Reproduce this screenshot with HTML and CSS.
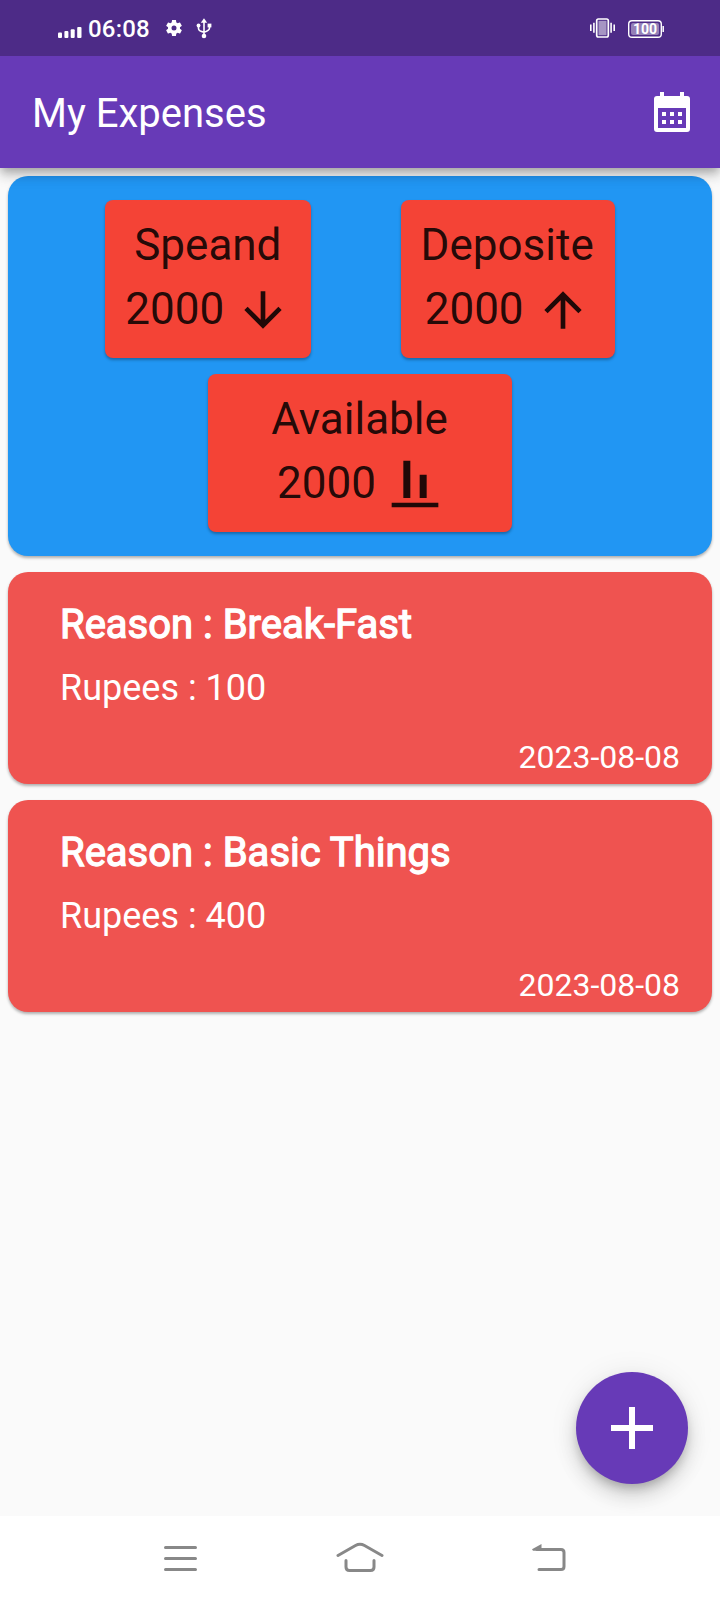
FILE: index.html
```
<!DOCTYPE html>
<html lang="en">
<head>
<meta charset="utf-8">
<title>My Expenses</title>
<link rel="stylesheet" href="styles.css">
</head>
<body>
<div class="screen">
  <header class="status-bar">
    <svg class="signal" width="24" height="11" viewBox="0 0 24 11" fill="#fff"><rect y="5.4" width="4" height="5.6" rx="1"/><rect x="6.4" y="4" width="4" height="7" rx="1"/><rect x="12.7" y="2.2" width="4" height="8.8" rx="1"/><rect x="19.2" width="4.3" height="11" rx="1"/></svg>
    <span class="clock">06:08</span>
    <svg class="gear" width="20" height="20" viewBox="0 0 24 24" fill="#fff"><path d="M19.14 12.94c.04-.3.06-.61.06-.94 0-.32-.02-.64-.07-.94l2.03-1.58c.18-.14.23-.41.12-.61l-1.92-3.32c-.12-.22-.37-.29-.59-.22l-2.39.96c-.5-.38-1.03-.7-1.62-.94l-.36-2.54c-.04-.24-.24-.41-.48-.41h-3.84c-.24 0-.43.17-.47.41l-.36 2.54c-.59.24-1.13.57-1.62.94l-2.39-.96c-.22-.08-.47 0-.59.22L2.74 8.87c-.12.21-.08.47.12.61l2.03 1.58c-.05.3-.09.63-.09.94s.02.64.07.94l-2.03 1.58c-.18.14-.23.41-.12.61l1.92 3.32c.12.22.37.29.59.22l2.39-.96c.5.38 1.03.7 1.62.94l.36 2.54c.05.24.24.41.48.41h3.84c.24 0 .44-.17.47-.41l.36-2.54c.59-.24 1.13-.56 1.62-.94l2.39.96c.22.08.47 0 .59-.22l1.92-3.32c.12-.22.07-.47-.12-.61l-2.01-1.58zM12 15a3 3 0 1 1 0-6 3 3 0 0 1 0 6z"/></svg>
    <svg class="usb" width="16" height="21" viewBox="0 0 16 21" fill="none" stroke="#fff" stroke-width="1.6"><path d="M8 3v14M2.5 7v3.5Q2.5 13 8 14.2M13.500 7v3Q13.500 12.500 8 14.200"/><g fill="#fff" stroke="none"><path d="M8 .2 11.200 4.700H4.800z"/><circle cx="8" cy="18" r="2.300"/><circle cx="2.500" cy="7.500" r="1.900"/><path d="M11.600 5.600h3.800v3.800h-3.800z"/></g></svg>
    <span class="spacer"></span>
    <svg class="vibrate" width="25" height="20" viewBox="0 0 25 20"><rect x="6.700" y="1" width="11.600" height="18" rx="1.700" fill="none" stroke="#fff" stroke-width="1.700"/><rect x="8.500" y="2.800" width="8" height="14.400" fill="#a695c3"/><path d="M.800 6.500v6.500M3.900 4.800v10M21.100 4.800v10M24.200 6.500v6.500" stroke="#fff" stroke-width="1.600"/></svg>
    <div class="battery">
      <svg width="36" height="18" viewBox="0 0 36 18"><rect x=".700" y=".700" width="32.600" height="16.600" rx="3.300" fill="none" stroke="#fff" stroke-width="1.400"/><rect x="3" y="3" width="28" height="12" rx="2" fill="#9480b7"/><path d="M35.200 6v6" stroke="#fff" stroke-width="1.500"/></svg>
      <span class="level">100</span>
    </div>
  </header>
  <div class="app-bar">
    <h1 class="title">My Expenses</h1>
    <svg width="48" height="48" viewBox="0 0 24 24" fill="#fff" fill-rule="evenodd"><path d="M6 1h2v2h8V1h2v2h1.500A1.500 1.500 0 0 1 21 4.500v15a1.500 1.500 0 0 1-1.500 1.500h-15A1.500 1.500 0 0 1 3 19.500v-15A1.500 1.500 0 0 1 4.500 3H6zM5 9v10h14V9zM7 11h2v2H7zM11 11h2v2h-2zM15 11h2v2h-2zM7 15h2v2H7zM11 15h2v2h-2zM15 15h2v2h-2z"/></svg>
  </div>
  <main class="content">
    <section class="summary">
      <div class="summary-row">
        <div class="tile spent"><div class="label">Speand</div><div class="amount">2000<svg width="56" height="56" viewBox="0 0 24 24"><path d="m20 12-1.410-1.410L13 16.170V4h-2v12.170l-5.580-5.590L4 12l8 8z"/></svg></div></div>
        <div class="tile deposit"><div class="label">Deposite</div><div class="amount">2000<svg width="56" height="56" viewBox="0 0 24 24"><path d="m4 12 1.410 1.410L11 7.830V20h2V7.830l5.580 5.590L20 12l-8-8z"/></svg></div></div>
      </div>
      <div class="tile wide"><div class="label">Available</div><div class="amount">2000<svg width="56" height="56" viewBox="0 0 24 24"><path d="M22 22H2v-2h20zM10 2H7v16h3zM17 8h-3v10h3z"/></svg></div></div>
    </section>
    <article class="expense">
      <h2 class="reason">Reason : Break-Fast</h2>
      <p class="rupees">Rupees : 100</p>
      <time class="date">2023-08-08</time>
    </article>
    <article class="expense">
      <h2 class="reason">Reason : Basic Things</h2>
      <p class="rupees">Rupees : 400</p>
      <time class="date">2023-08-08</time>
    </article>
  </main>
  <button class="fab" aria-label="Add expense"><svg width="72" height="72" viewBox="0 0 24 24" fill="#fff"><path d="M19 13h-6v6h-2v-6H5v-2h6V5h2v6h6z"/></svg></button>
  <nav class="nav-bar">
    <svg width="48" height="40" viewBox="0 0 48 40"><path d="M9.500 9.500h30M9.500 20.500h30M9.500 31.500h30"/></svg>
    <svg width="48" height="40" viewBox="0 0 48 40"><path d="m2 17.500 17.500-10Q24 5 28.500 7.500l17.500 10M10 22.500V29q0 3.500 3.500 3.500h21q3.500 0 3.500-3.500v-6.500"/></svg>
    <svg width="48" height="40" viewBox="0 0 48 40"><path d="M9 11.500h24q3 0 3 3v14q0 3-3 3H11"/><path class="tip" d="M4 11.200 13.500 6v6.800H5z"/></svg>
  </nav>
</div>
</body>
</html>
```
FILE: styles.css
```
* { box-sizing: border-box; }
body { margin: 0; font-family: Roboto, "Liberation Sans", sans-serif; }
h1, h2, p { margin: 0; font-weight: 400; }
svg { display: block; flex: none; }

.screen {
  position: relative;
  display: flex;
  flex-direction: column;
  width: 720px;
  height: 1600px;
  background: #fafafa;
  overflow: hidden;
}

.status-bar {
  position: relative;
  z-index: 2;
  display: flex;
  align-items: center;
  height: 56px;
  padding: 0 56px 0 58px;
  background: #4d2b87;
  color: #fff;
}
.signal { margin-top: 9px; }
.clock { margin: 2px 0 0 6px; width: 62px; font-size: 24px; font-weight: 500; line-height: 56px; letter-spacing: .2px; }
.gear { margin-left: 14px; }
.usb { margin-left: 12px; }
.spacer { flex: 1; }
.vibrate { margin-right: 13px; }
.battery { display: grid; margin-top: 2px; }
.battery > * { grid-area: 1 / 1; }
.level {
  width: 34px;
  font-size: 14px;
  font-weight: 700;
  line-height: 19px;
  text-align: center;
}

.app-bar {
  position: relative;
  z-index: 1;
  display: flex;
  align-items: center;
  justify-content: space-between;
  height: 112px;
  padding: 4px 24px 0 32px;
  background: #673ab7;
  color: #fff;
  box-shadow: 0 4px 8px -2px rgba(0, 0, 0, .2), 0 8px 10px rgba(0, 0, 0, .14), 0 2px 20px rgba(0, 0, 0, .12);
}
.title { font-size: 40px; line-height: 48px; }

.content { flex: 1; display: flex; flex-direction: column; gap: 16px; padding: 8px; }
.summary {
  position: relative;
  display: flex;
  flex-direction: column;
  align-items: center;
  gap: 16px;
  height: 380px;
  padding: 24px 8px;
  border-radius: 20px;
  background: #2196f3;
  box-shadow: 0 2px 3px rgba(0, 0, 0, .3);
}
.summary-row { display: flex; justify-content: space-evenly; width: 100%; }
.tile {
  display: flex;
  flex-direction: column;
  align-items: center;
  height: 158px;
  padding: 19px 0 20px;
  border-radius: 8px;
  background: #f44336;
  color: rgba(0, 0, 0, .87);
  font-size: 44px;
  box-shadow: 0 2px 3px rgba(0, 0, 0, .3);
}
.spent { width: 206px; }
.deposit { width: 214px; }
.wide { width: 304px; }
.label { padding-right: 1px; line-height: 52px; }
.amount { display: flex; gap: 11px; margin-top: 11px; height: 56px; line-height: 54px; }
.amount svg { fill: currentColor; }

.expense {
  display: flex;
  flex-direction: column;
  height: 212px;
  padding: 29px 32px 0 52px;
  border-radius: 20px;
  background: #ef5350;
  color: #fff;
  box-shadow: 0 2px 3px rgba(0, 0, 0, .3);
}
.reason { font-size: 40px; line-height: 48px; -webkit-text-stroke: 1.300px #fff; }
.rupees { margin-top: 17px; font-size: 36px; line-height: 44px; }
.date { align-self: flex-end; margin-top: 28px; font-size: 32px; line-height: 38px; }

.fab {
  position: absolute;
  right: 32px;
  bottom: 116px;
  display: grid;
  place-items: center;
  width: 112px;
  height: 112px;
  padding: 0;
  border: 0;
  border-radius: 50%;
  background: #673ab7;
  box-shadow: 0 6px 10px -2px rgba(0, 0, 0, .2), 0 12px 20px rgba(0, 0, 0, .14), 0 2px 30px rgba(0, 0, 0, .08);
}

.nav-bar {
  position: relative;
  display: flex;
  justify-content: space-between;
  align-items: center;
  height: 84px;
  padding: 0 144px 0 156px;
  background: #fff;
}
.nav-bar svg:nth-child(2) { margin-right: 12px; }
.nav-bar path { fill: none; stroke: #888; stroke-width: 3; stroke-linecap: round; }
.nav-bar .tip { fill: #888; stroke: none; }
```
